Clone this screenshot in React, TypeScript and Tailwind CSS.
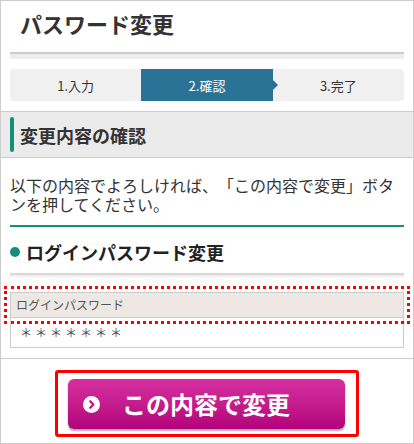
const FONT = 'font-["Noto_Sans_CJK_JP","Noto_Sans",sans-serif]'

const steps = [
  { label: '1.入力', active: false },
  { label: '2.確認', active: true },
  { label: '3.完了', active: false },
]

export default function App() {
  return (
    <div className={`w-[414px] h-[444px] border border-[#ccc] bg-white overflow-hidden text-[#333] [text-spacing-trim:space-all] ${FONT}`}>
      {/* Page title */}
      <div className="h-[51px] px-[19px] pt-[7px]">
        <h1 className="text-[22px] leading-[30px] font-bold text-[#333]">パスワード変更</h1>
      </div>
      <div className="mx-[9px]">
        <div className="h-[2px] bg-[#ccc]" />
        <div className="h-[5px] bg-[#eee]" />
      </div>

      {/* Steps */}
      <div className="mx-[9px] mt-[10px] h-[32px] flex rounded-[4px] bg-[#f0f0f0]">
        {steps.map((s) => (
          <div
            key={s.label}
            className={`relative flex-1 flex items-center justify-center text-[13px] leading-none ${
              s.active ? 'bg-[#2a7396] text-white' : 'text-[#333]'
            }`}
          >
            {s.label}
            {s.active && (
              <span className="absolute left-full top-1/2 -translate-y-1/2 w-0 h-0 border-y-[5px] border-y-transparent border-l-[5px] border-l-[#2a7396]" />
            )}
          </div>
        ))}
      </div>

      {/* Section header */}
      <div className="mt-[10px] h-[47px] border-y border-[#ccc] bg-[#ebebeb] px-[9px] flex items-center gap-[6px]">
        <span className="w-[4px] h-[35px] rounded-[2px] bg-[#139078]" />
        <h2 className="text-[18px] leading-none font-bold text-[#333]">変更内容の確認</h2>
      </div>

      <div className="px-[9px]">
        <p className="mt-[18px] text-[16px] leading-[19px] text-[#333]">
          以下の内容でよろしければ、「この内容で変更」ボタンを押してください。
        </p>
        <div className="mt-[11px] h-[2px] bg-[#139078]" />

        {/* Sub heading */}
        <div className="mt-[12px] h-[26px] flex items-center gap-[6px]">
          <span className="w-[10px] h-[10px] rounded-full bg-[#139078]" />
          <h3 className="text-[18px] leading-none font-bold text-[#222]">ログインパスワード変更</h3>
        </div>
        <div className="mt-[8px] h-[2px] bg-[#d8d8d8]" />
        <div className="h-[2px] bg-[#efefef]" />

        {/* Table */}
        <div className="mt-[15px]">
          <div className="relative">
            <div className="h-[26px] border border-[#ccc] bg-[#ede8e4] px-[5px] flex items-center text-[12px] leading-none text-[#555]">
              ログインパスワード
            </div>
            <div className="absolute -inset-[6px] border-[3px] border-dotted border-[#f00]" />
          </div>
          <div className="h-[30px] border-x border-b border-[#ccc] px-[9px] flex items-center text-[12px] tracking-[3px] leading-none text-[#445]">
            ＊＊＊＊＊＊＊
          </div>
        </div>
      </div>

      <div className="mt-[10px] h-[1px] bg-[#ccc]" />

      {/* Submit */}
      <div className="mt-[11px] flex justify-center">
        <div className="w-[304px] border-[3px] border-[#f00] rounded-[3px] pt-[6px] pb-[5px] pl-[10px]">
          <button className="w-[277px] h-[50px] rounded-[6px] bg-linear-to-b from-[#d62ea1] to-[#b3007a] shadow-[0_2px_2px_rgba(0,0,0,0.35)] flex items-center pl-[15px] text-white">
            <svg width="17" height="17" viewBox="0 0 17 17">
              <circle cx="8.5" cy="8.5" r="8.5" fill="#fff" />
              <path d="M7.2 5.2 L10.4 8.5 L7.2 11.8" fill="none" stroke="#c01288" strokeWidth="2.2" strokeLinecap="round" strokeLinejoin="round" />
            </svg>
            <span className="ml-[22px] text-[24px] leading-none font-bold">この内容で変更</span>
          </button>
        </div>
      </div>
    </div>
  )
}
